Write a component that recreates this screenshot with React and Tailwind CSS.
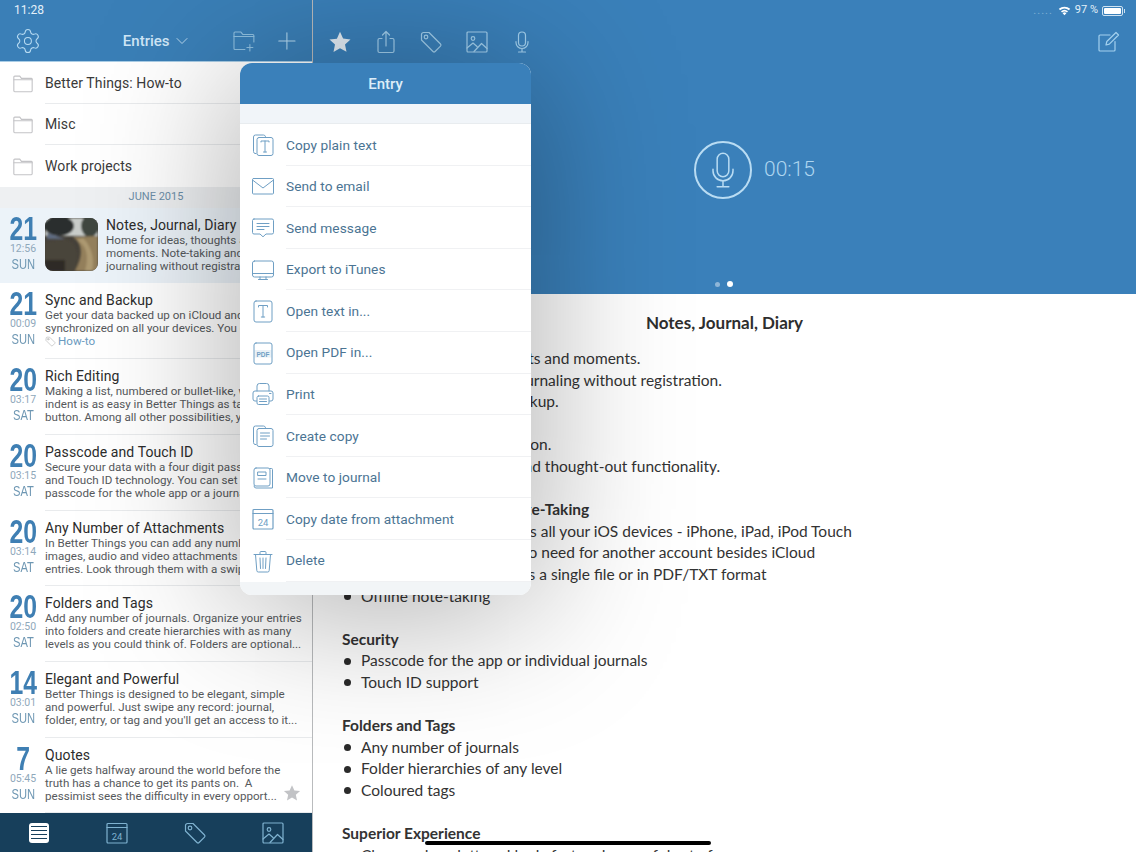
import { Settings, ChevronDown, Plus } from "lucide-react";

const sans = "font-['Roboto',sans-serif]";

const Svg = ({ size = 24, className = "", sw = 1.2, children, box = 24 }) => (
  <svg
    width={size}
    height={size}
    viewBox={`0 0 ${box} ${box}`}
    fill="none"
    stroke="currentColor"
    strokeWidth={sw}
    strokeLinecap="round"
    strokeLinejoin="round"
    className={className}
  >
    {children}
  </svg>
);

const FolderIcon = () => (
  <Svg size={22} className="text-[#c3c3c6]">
    <path d="M2 20.500V5.500a1 1 0 0 1 1-1h5.500l1.800 2.500H21a1 1 0 0 1 1 1v12.500a1 1 0 0 1-1 1H3a1 1 0 0 1-1-1z" />
    <path d="M2 8.500h20" />
  </Svg>
);

const TagIcon = ({ size = 24, className = "" }) => (
  <Svg size={size} className={className}>
    <path d="M2.500 4.500a2 2 0 0 1 2-2h5.500l11.500 11.500a1.500 1.500 0 0 1 0 2.100l-5.400 5.400a1.500 1.500 0 0 1-2.100 0L2.500 10z" />
    <circle cx="7" cy="7" r="1.800" />
  </Svg>
);

const PhotoIcon = ({ size = 24, className = "" }) => (
  <Svg size={size} className={className}>
    <rect x="2" y="2" width="20" height="20" rx="1" />
    <circle cx="8" cy="8.500" r="1.800" />
    <path d="M2 18l6-5 4 3.500M9 21.500l7.500-8 5.500 5" />
  </Svg>
);

const MicIcon = ({ size = 24, className = "", sw = 1.2 }) => (
  <Svg size={size} className={className} sw={sw}>
    <rect x="8.500" y="2" width="7" height="14" rx="3.500" />
    <path d="M6 11.500v1a6 6 0 0 0 12 0v-1M12 18.500V22M8.500 22h7" />
  </Svg>
);

const CalIcon = ({ size = 24, className = "" }) => (
  <Svg size={size} className={className}>
    <rect x="2" y="2.500" width="20" height="19.500" rx="1" />
    <path d="M2 6.500h20" />
    <text x="12" y="18.500" textAnchor="middle" fontSize="9.500" fill="currentColor" stroke="none" fontFamily="Roboto">24</text>
  </Svg>
);

const menuIcons = {
  copyText: (
    <>
      <path d="M5 20.500H4a2 2 0 0 1-1.500-2V4a2 2 0 0 1 2-2h8a2 2 0 0 1 2 1.500" />
      <rect x="6" y="4.500" width="16" height="18" rx="2" />
      <path d="M10 9V8h8v1M14 8v11M12.500 19h3" />
    </>
  ),
  mail: (
    <>
      <rect x="1.500" y="4.500" width="21" height="15.500" rx="1" />
      <path d="M1.500 6l10.500 8 10.500-8" />
    </>
  ),
  message: (
    <>
      <path d="M3 3h18a1.500 1.500 0 0 1 1.500 1.500v12A1.500 1.500 0 0 1 21 18h-6l-3 2.800L9 18H3a1.500 1.500 0 0 1-1.500-1.500v-12A1.500 1.500 0 0 1 3 3z" />
      <path d="M6 7.500h12M6 10.500h12M6 13.500h7" />
    </>
  ),
  monitor: (
    <>
      <rect x="1.500" y="3" width="21" height="16" rx="2" />
      <path d="M1.500 15.500h21M9 19v2M15 19v2M7.500 21.500h9" />
    </>
  ),
  text: (
    <>
      <rect x="3" y="2" width="18" height="21" rx="2" />
      <path d="M7.500 8V6.500h9V8M12 6.500V18M10.300 18h3.400" />
    </>
  ),
  pdf: (
    <>
      <rect x="3" y="2" width="18" height="21" rx="2" />
      <rect x="3.500" y="9" width="17" height="7.500" fill="currentColor" stroke="none" opacity=".15" />
      <text x="12" y="15.500" textAnchor="middle" fontSize="6.500" fontWeight="700" fill="currentColor" stroke="none" fontFamily="Liberation Sans">PDF</text>
    </>
  ),
  print: (
    <>
      <path d="M6 9V4a2.500 2.500 0 0 1 2.500-2.500h7A2.500 2.500 0 0 1 18 4v5" />
      <path d="M5.500 19H4a2 2 0 0 1-2-2v-6a2 2 0 0 1 2-2h16a2 2 0 0 1 2 2v6a2 2 0 0 1-2 2h-1.500" />
      <rect x="6" y="14" width="12" height="8.500" rx="1.500" />
      <path d="M8.500 17h7M8.500 19.500h7M18.500 11.500h1.500" />
    </>
  ),
  copy: (
    <>
      <path d="M5 20.500H4a2 2 0 0 1-1.500-2V4a2 2 0 0 1 2-2h8a2 2 0 0 1 2 1.500" />
      <rect x="6" y="4.500" width="16" height="18" rx="2" />
      <path d="M9.500 9h9M9.500 12h9M9.500 15h6" />
    </>
  ),
  journal: (
    <>
      <path d="M19 2.500h1.500a1 1 0 0 1 1 1V22H5a2 2 0 0 1-2-2" />
      <rect x="3" y="2" width="16" height="18" rx="2" />
      <rect x="7" y="6" width="8" height="3.500" />
      <path d="M7 13h8" />
    </>
  ),
  trash: (
    <>
      <path d="M3 5.500h18M9 5V3.500a1 1 0 0 1 1-1h4a1 1 0 0 1 1 1V5" />
      <path d="M4.500 5.500l1.300 16a1.500 1.500 0 0 0 1.500 1.500h9.400a1.500 1.500 0 0 0 1.500-1.500l1.300-16" />
      <path d="M9 9l.5 10.500M12 9v10.500M15 9l-.5 10.500" />
    </>
  ),
};

const menu = [
  ["Copy plain text", menuIcons.copyText],
  ["Send to email", menuIcons.mail],
  ["Send message", menuIcons.message],
  ["Export to iTunes", menuIcons.monitor],
  ["Open text in...", menuIcons.text],
  ["Open PDF in...", menuIcons.pdf],
  ["Print", menuIcons.print],
  ["Create copy", menuIcons.copy],
  ["Move to journal", menuIcons.journal],
  ["Copy date from attachment", null],
  ["Delete", menuIcons.trash],
];

const folders = ["Better Things: How-to", "Misc", "Work projects"];

const entries = [
  {
    day: "21", time: "12:56", wd: "SUN", title: "Notes, Journal, Diary", thumb: true,
    lines: ["Home for ideas, thoughts and", "moments. Note-taking and", "journaling without registration."],
  },
  {
    day: "21", time: "00:09", wd: "SUN", title: "Sync and Backup", tag: "How-to",
    lines: ["Get your data backed up on iCloud and", "synchronized on all your devices. You can"],
  },
  {
    day: "20", time: "03:17", wd: "SAT", title: "Rich Editing",
    lines: ["Making a list, numbered or bullet-like, with", "indent is as easy in Better Things as tapping", "button. Among all other possibilities, you..."],
  },
  {
    day: "20", time: "03:15", wd: "SAT", title: "Passcode and Touch ID",
    lines: ["Secure your data with a four digit passcode", "and Touch ID technology. You can set a", "passcode for the whole app or a journal..."],
  },
  {
    day: "20", time: "03:14", wd: "SAT", title: "Any Number of Attachments",
    lines: ["In Better Things you can add any number of", "images, audio and video attachments to your", "entries. Look through them with a swipe..."],
  },
  {
    day: "20", time: "02:50", wd: "SAT", title: "Folders and Tags",
    lines: ["Add any number of journals. Organize your entries", "into folders and create hierarchies with as many", "levels as you could think of. Folders are optional..."],
  },
  {
    day: "14", time: "03:01", wd: "SUN", title: "Elegant and Powerful",
    lines: ["Better Things is designed to be elegant, simple", "and powerful. Just swipe any record: journal,", "folder, entry, or tag and you'll get an access to it..."],
  },
  {
    day: "7", time: "05:45", wd: "SUN", title: "Quotes", star: true,
    lines: ["A lie gets halfway around the world before the", "truth has a chance to get its pants on.  A", "pessimist sees the difficulty in every opport..."],
  },
];

const Thumb = () => (
  <svg width="53" height="53" viewBox="0 0 53 53" className="rounded-lg shrink-0">
    <defs>
      <filter id="soft"><feGaussianBlur stdDeviation="1.300" /></filter>
    </defs>
    <rect width="53" height="53" fill="#45413a" />
    <g filter="url(#soft)">
      <rect width="53" height="18" fill="#c9cdca" />
      <ellipse cx="14" cy="8" rx="15" ry="10" fill="#2a2e2e" />
      <ellipse cx="45" cy="8" rx="9" ry="11" fill="#3f463f" />
      <path d="M2 15 L20 21 L2 21 Z" fill="#5d6a80" />
      <path d="M20 21 C34 26 36 36 30 53 H0 V24 Z" fill="#4a453b" />
      <path d="M28 19 L53 18 V53 H30 C38 38 38 26 28 19 Z" fill="#94805c" />
      <path d="M32 22 C42 28 44 38 40 53 H47 C50 40 46 28 38 20 Z" fill="#ad9a72" />
      <path d="M0 42 H20 V53 H0 Z" fill="#2f2c27" />
    </g>
  </svg>
);

const Entry = ({ e, index }) => (
  <div className={`h-[75.7px] flex shrink-0 relative ${index === 0 ? "bg-[#ecf3f9]" : ""}`}>
    <div className="w-[45px] shrink-0 flex flex-col items-center pt-[6px] pl-[1px]">
      <div className="h-[29px] leading-[29px] text-[33px] font-bold text-[#3f7fb3] font-['Liberation_Sans',sans-serif] scale-x-[0.75]">{e.day}</div>
      <div className="h-[12px] leading-[12px] text-[10.5px] text-[#8fa8bb]">{e.time}</div>
      <div className="h-[18px] leading-[18px] text-[15.5px] text-[#6e97b3] font-['Liberation_Sans',sans-serif] scale-x-[0.72]">{e.wd}</div>
    </div>
    <div className={`flex flex-1 min-w-0 ${index !== 0 ? "border-b border-[#e9ebed]" : ""}`}>
      {e.thumb && <div className="pt-[10px] mr-2"><Thumb /></div>}
      <div className="pt-[8px] min-w-0 flex-1">
        <div className="text-[14px] tracking-[0.1px] leading-[18px] text-[#2c2c2c] whitespace-nowrap">{e.title}</div>
        {e.lines.map((l) => (
          <div key={l} className="text-[11.6px] leading-[13px] text-[#56595c] whitespace-pre">{l}</div>
        ))}
        {e.tag && (
          <div className="flex items-center gap-[2px] text-[11.6px] leading-[13px] text-[#6a9ac0]">
            <TagIcon size={11} className="text-[#a9a9a9]" />
            {e.tag}
          </div>
        )}
      </div>
    </div>
    {e.star && (
      <svg width="18" height="18" viewBox="0 0 24 24" className="absolute right-[11px] bottom-[11px] text-[#c2c3c6]" fill="currentColor">
        <path d="M12 1.500l3.200 7 7.600.8-5.700 5.100 1.600 7.600L12 18.100 5.300 22l1.600-7.600L1.200 9.300l7.600-.8z" />
      </svg>
    )}
  </div>
);

const Li = ({ children }) => (
  <div className="flex items-center whitespace-nowrap">
    <span className="w-[7px] h-[7px] rounded-full bg-[#2b2b2b] mr-[10px] ml-[2px] shrink-0" />
    <span>{children}</span>
  </div>
);

const Gap = () => <div className="h-[21.6px]" />;

const App = () => {
  return (
    <div className={`relative w-[1136px] h-[852px] overflow-hidden flex bg-white ${sans}`}>
      {/* left column */}
      <div className="w-[313px] h-full flex flex-col shrink-0 border-r border-[#b9bbbd]">
        <div className="h-[62px] shrink-0 bg-[#3a7fb7] border-b border-[#a9cde6] text-[#b7dbf2]">
          <div className="h-[22px] pl-[14px] pt-[3px] text-[12px] leading-[14px] text-[#e3f0f9]">11:28</div>
          <div className="flex items-center h-[38px] pl-[14px] pr-[11px]">
            <Settings size={28} strokeWidth={0.9} />
            <div className="flex items-center ml-[81px] text-[15px] font-medium text-[#cfe6f6] w-[75px]">
              Entries
              <ChevronDown size={20} strokeWidth={1} className="ml-[2px]" />
            </div>
            <Svg size={24} sw={1.1} className="ml-[35px] text-[#8fc0e0]">
              <path d="M13 20.500H3a1 1 0 0 1-1-1V4a1 1 0 0 1 1-1h6l2 2.500h10a1 1 0 0 1 1 1V13" />
              <path d="M2 7.500h20M18 15.500v6.500M15 18.500h6" />
            </Svg>
            <Plus size={28} strokeWidth={0.9} className="ml-[17px]" />
          </div>
        </div>

        {folders.map((f, i) => (
          <div key={f} className="h-[41.6px] shrink-0 flex items-center">
            <div className="w-[45px] flex justify-center pl-[1px]"><FolderIcon /></div>
            <div className={`flex-1 h-full pt-[2px] flex items-center text-[14px] tracking-[0.1px] text-[#3a3a3a] ${i < 2 ? "border-b border-[#e9ebed]" : ""}`}>{f}</div>
          </div>
        ))}

        <div className="h-[21px] shrink-0 bg-[#eef0f2] flex items-center justify-center text-[11px] text-[#6c8ea8]">
          JUNE 2015
        </div>

        <div className="flex-1 min-h-0 overflow-hidden">
          {entries.map((e, i) => (
            <Entry key={e.title} e={e} index={i} />
          ))}
        </div>

        <div className="h-[39px] shrink-0 bg-[#173f5b] grid grid-cols-4 items-center justify-items-center text-[#7fb2d0]">
          <div className="w-[20px] h-[20px] rounded-[3px] bg-white flex flex-col justify-center gap-[3px] px-[2px]">
            {[0, 1, 2, 3].map((k) => (
              <div key={k} className="h-[1px] bg-[#173f5b]" />
            ))}
          </div>
          <CalIcon size={24} />
          <TagIcon size={24} />
          <PhotoIcon size={24} />
        </div>
      </div>

      {/* right column */}
      <div className="flex-1 min-w-0 flex flex-col">
        <div className="shrink-0 h-[294px] bg-[#3a80ba] flex flex-col text-[#a3d0ee]">
          <div className="h-[21px] flex items-center justify-end pr-[11px] text-[11px] text-[#e3f0f9]">
            <span className="tracking-[1px] text-[#7fb0d4] mr-[5px] leading-[10px]">.....</span>
            <svg width="13" height="10" viewBox="0 0 24 18" fill="currentColor" className="mr-[4px] text-white">
              <path d="M12 17l-3.500-4a5 5 0 0 1 7 0zM5.500 9.500l2 2.300a7 7 0 0 1 9 0l2-2.300a10 10 0 0 0-13 0zM1.500 5l2.300 2.500a13 13 0 0 1 16.400 0L22.500 5a16 16 0 0 0-21 0z" />
            </svg>
            <span className="mr-[4px]">97 %</span>
            <div className="w-[21px] h-[10px] rounded-[2px] border border-[#cfe3f2] p-[1px]"><div className="w-full h-full bg-white rounded-[1px]" /></div>
            <div className="w-[1px] h-[4px] bg-[#cfe3f2] ml-[1px]" />
          </div>
          <div className="h-[41px] flex items-center pl-[15px] pr-[16px] gap-[21.600px]">
            <svg width="24" height="24" viewBox="0 0 24 24" fill="#e4eef6">
              <path d="M12 1.800l3.100 6.800 7.400.8-5.500 5 1.500 7.300L12 18.200l-6.500 3.700L7 14.600l-5.500-5 7.400-.8z" />
            </svg>
            <Svg size={24}>
              <path d="M8 8.500H5.500a1.500 1.500 0 0 0-1.500 1.500v11a1.500 1.500 0 0 0 1.500 1.500h13a1.500 1.500 0 0 0 1.500-1.500V10a1.500 1.500 0 0 0-1.500-1.500H16" />
              <path d="M12 16V1.500M8.500 5L12 1.500 15.500 5" />
            </Svg>
            <TagIcon />
            <PhotoIcon />
            <MicIcon />
            <Svg size={24} className="ml-auto">
              <path d="M19 11.500V20a1 1 0 0 1-1 1H4a1 1 0 0 1-1-1V6a1 1 0 0 1 1-1h10" />
              <path d="M10 15l.8-3.500L20 2.500 22.500 5l-9.200 9.200z" />
            </Svg>
          </div>
          <div className="flex items-center justify-center mt-[79px] pl-[60px] text-[#b9dcf3]">
            <div className="w-[58px] h-[58px] rounded-full border-2 border-[#b9dcf3] flex items-center justify-center">
              <MicIcon size={40} sw={0.9} />
            </div>
            <span className="ml-[12px] text-[21px] font-light text-[#aed6f0]">00:15</span>
          </div>
          <div className="flex justify-center items-center gap-[7px] mt-[82px] pr-[2px]">
            <div className="w-[5px] h-[5px] rounded-full bg-[#8fb6d8]" />
            <div className="w-[6px] h-[6px] rounded-full bg-white" />
          </div>
        </div>

        <div className="flex-1 min-h-0 overflow-hidden pl-[29px] pt-[18px] text-[15.5px] leading-[21.600px] text-[#333] font-['Lato',sans-serif]">
          <div className="text-center font-bold text-[#2e2e2e] text-[17px] ml-[-29px] h-[26px]">Notes, Journal, Diary</div>
          <div className="h-[10px]" />
          <div>The home for ideas, thoughts and moments.</div>
          <div>Note-taking, logging and journaling without registration.</div>
          <div>Secure, and with iCloud backup.</div>
          <Gap />
          <div>Elegant and simple application.</div>
          <div>Beautiful, modern design and thought-out functionality.</div>
          <Gap />
          <div className="font-bold">Journaling, Diaries, and Note-Taking</div>
          <Li>Instant iCloud sync across all your iOS devices - iPhone, iPad, iPod Touch</Li>
          <Li>Data backup to iCloud, no need for another account besides iCloud</Li>
          <Li>Export all your journals as a single file or in PDF/TXT format</Li>
          <Li>Offline note-taking</Li>
          <Gap />
          <div className="font-bold">Security</div>
          <Li>Passcode for the app or individual journals</Li>
          <Li>Touch ID support</Li>
          <Gap />
          <div className="font-bold">Folders and Tags</div>
          <Li>Any number of journals</Li>
          <Li>Folder hierarchies of any level</Li>
          <Li>Coloured tags</Li>
          <Gap />
          <div className="font-bold">Superior Experience</div>
          <Li>Clean and uncluttered look, fast and powerful set of</Li>
        </div>
      </div>

      {/* popover */}
      <div className="absolute left-[240px] top-[63px] w-[291px] h-[532px] rounded-xl overflow-hidden bg-white flex flex-col shadow-[0_10px_150px_rgba(0,0,0,0.36)]">
        <div className="h-[41px] shrink-0 pt-[1px] bg-[#3a80ba] flex items-center justify-center text-[15px] font-medium text-[#dcedf8]">Entry</div>
        <div className="h-[20px] shrink-0 bg-[#f1f5f9] border-b border-[#e8ecef]" />
        {menu.map(([label, icon]) => (
          <div key={label} className="h-[41.600px] shrink-0 flex items-center">
            <div className="w-[46px] flex justify-center text-[#6f9fc4]">
              {icon ? <Svg size={24} sw={1}>{icon}</Svg> : <CalIcon size={24} />}
            </div>
            <div className="flex-1 h-full pt-[1px] flex items-center text-[13.7px] tracking-[0.05px] text-[#4b7493] border-b border-[#f0f1f3]">{label}</div>
          </div>
        ))}
        <div className="flex-1 bg-[#f2f5f7]" />
      </div>

      {/* home indicator */}
      <div className="absolute left-[425px] top-[841px] w-[286px] h-[4px] rounded-full bg-black" />
    </div>
  );
};

export default App;
